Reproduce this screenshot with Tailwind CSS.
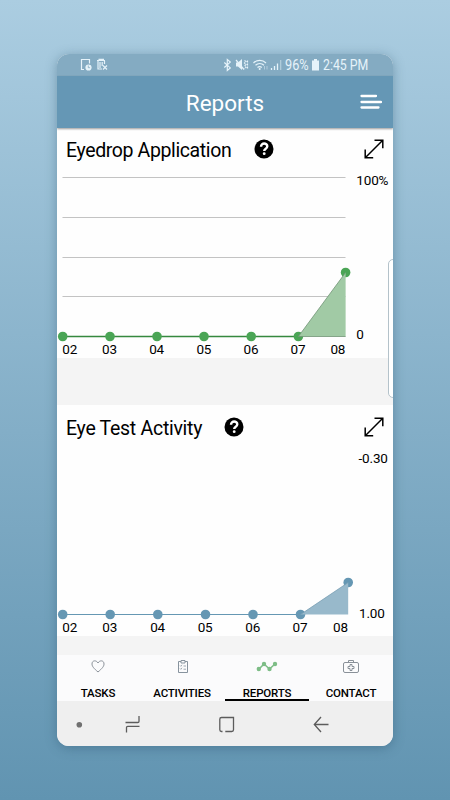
<!DOCTYPE html>
<html lang="en">
<head>
    <meta charset="UTF-8">
    <meta name="viewport" content="width=device-width, initial-scale=1.0">
    <title>Reports</title>
    <script src="https://cdn.jsdelivr.net/npm/@tailwindcss/browser@4"></script>
</head>
<body class="h-[800px] overflow-hidden bg-linear-to-b from-[#abcde1] to-[#6194b1] font-[Roboto,sans-serif] text-black">
    <div class="relative ml-[57px] mt-[54px] flex h-[692px] w-[336px] flex-col overflow-hidden rounded-xl bg-[#f4f4f4] shadow-[0_2px_12px_rgba(40,80,105,0.4)]">

        <!-- Status bar -->
        <div class="flex h-[22px] shrink-0 items-center bg-[#84abc2] text-[#e6f3fa]">
            <svg class="h-[22px] w-[166px] shrink-0" viewBox="57 54 166 22" fill="none" stroke="currentColor">
                <path d="M84 69.5h-2.5v-10h8v4" stroke-width="1.2"/>
                <circle cx="88.5" cy="67.5" r="3.1" fill="currentColor" stroke="none"/>
                <path d="M88.3 65.5v2.2h1.8" stroke="#84abc2" stroke-width=".8"/>
                <path d="M97 60.5h8M98 60.5v8.5h4M100 62v6M102.2 62v4M104.5 61v3M98.5 59.3h5.5" stroke-width="1.2"/>
                <path d="M103 65.5l4 4M107 65.5l-4 4" stroke-width="1.1"/>
            </svg>
            <svg class="h-[22px] w-[62px] shrink-0" viewBox="223 54 62 22" fill="none" stroke="currentColor">
                <path d="M224.3 62.5l6 5.4-3 2.6v-11l3 2.6-6 5.4" stroke-width="1.2"/>
                <path d="M236 62.5h2l4-3.5v11l-4-3.5h-2z" fill="currentColor" stroke="none"/>
                <path d="M236 60l8 9.5" stroke-width="1.2"/>
                <path d="M244.5 60.5l1.500 1-1.500 1.500 1.500 1.500-1.500 1.500 1.500 1.500-1.500 1.500M247.500 60.500v9" stroke-width="1.2" stroke-dasharray="2 1"/>
                <path d="M253.500 63c3.500-3.500 9-3.500 12.500 0M255.500 65.300c2.500-2.300 6-2.300 8.500 0M257.500 67.500c1.300-1.200 3-1.200 4.300 0" stroke-width="1.200"/>
                <circle cx="259.700" cy="69" r="1" fill="currentColor" stroke="none"/>
                <path d="M264.500 66v3.500M267 66v3.500" stroke-width=".8" opacity=".6"/>
                <path d="M271.500 68v2M274.500 66v4M277.500 63.500v6.500" stroke-width="1.300"/>
                <path d="M280.700 60v10" stroke-width="1.200" opacity=".5"/>
            </svg>
            <span class="w-[26px] shrink-0 origin-left scale-x-[0.910] whitespace-nowrap pt-px text-[14px]">96%</span>
            <svg class="h-[22px] w-3 shrink-0" viewBox="311 54 12 22" fill="currentColor">
                <path d="M314 59h3v1.500h2V70.500h-7V60.500h2z"/>
            </svg>
            <span class="origin-left scale-x-[0.880] whitespace-nowrap pt-px text-[14px]">2:45 PM</span>
        </div>

        <!-- App header -->
        <header class="relative z-10 flex h-[52px] shrink-0 items-center bg-[#6597b5] shadow-[0_1px_2px_rgba(0,0,0,0.4)]">
            <h1 class="w-full pt-1 text-center text-[22.5px] text-white">Reports</h1>
            <svg class="absolute right-[11px] top-[18px] h-4 w-[22px]" viewBox="0 0 22 16" stroke="#fff" stroke-width="2.3" stroke-linecap="round">
                <path d="M1.5 2h14.5M1.5 8h19.5M1.5 13.5h17"/>
            </svg>
        </header>

        <!-- Eyedrop chart -->
        <section class="h-[230px] shrink-0 bg-[#fefefe]">
            <div class="flex h-11 items-center pl-[9px] pr-[9px]">
                <h2 class="w-[188px] whitespace-nowrap pt-px text-[19.5px] tracking-[-0.380px]">Eyedrop Application</h2>
                <svg class="mb-0.5 size-5" viewBox="0 0 20 20">
                    <circle cx="10" cy="10" r="9.5"/>
                    <path d="M7 7.800C7 3.300 13.300 3.800 13.300 7.300c0 2.500-3.100 2.200-3.100 4.600" fill="none" stroke="#fff" stroke-width="2.400"/>
                    <circle cx="10.200" cy="14.700" r="1.400" fill="#fff"/>
                </svg>
                <svg class="mb-0.5 ml-auto size-5" viewBox="0 0 20 20" fill="none" stroke="#000" stroke-width="1.500">
                    <path d="M1.500 18.500L18.500 1.500M10.500 1.200h8.300v8M1.200 10.500v8.300h8"/>
                </svg>
            </div>
            <svg class="block h-[186px] w-[336px] text-[13.5px] tracking-[-0.150px]" viewBox="57 172 336 186">
                <path d="M62.500 177.500h283M62.500 217.500h283M62.500 257.500h283M62.500 296.500h283" stroke="#c3c3c3"/>
                <path d="M62.500 336.500H298" stroke="#35893f" stroke-width="1.300"/>
                <g fill="#4aa555">
                    <circle cx="62.700" cy="336.500" r="4.800"/>
                    <circle cx="110" cy="336.500" r="4.800"/>
                    <circle cx="157" cy="336.500" r="4.800"/>
                    <circle cx="204" cy="336.500" r="4.800"/>
                    <circle cx="251.200" cy="336.500" r="4.800"/>
                    <circle cx="298.400" cy="336.500" r="4.800"/>
                    <circle cx="345.600" cy="272.500" r="4.800"/>
                </g>
                <path d="M298.400 336.500L345.600 272.500v64z" fill="#a1caa5"/>
                <path d="M345.600 336.500H298.400L345.600 272.500" fill="none" stroke="#719476" stroke-width=".8"/>
                <text x="62.300" y="354.400">02</text>
                <text x="102" y="354.400">03</text>
                <text x="149.200" y="354.400">04</text>
                <text x="196.400" y="354.400">05</text>
                <text x="243.500" y="354.400">06</text>
                <text x="290.500" y="354.400">07</text>
                <text x="330.400" y="354.400">08</text>
                <text x="356.300" y="185.300">100%</text>
                <text x="356.200" y="339.400">0</text>
            </svg>
        </section>

        <!-- Eye test chart -->
        <section class="mt-[47px] h-[231px] shrink-0 bg-[#fefefe]">
            <div class="flex h-11 items-center pl-[9px] pr-[9px]">
                <h2 class="w-[158px] whitespace-nowrap pt-[3px] text-[19.5px] tracking-[-0.280px]">Eye Test Activity</h2>
                <svg class="size-5" viewBox="0 0 20 20">
                    <circle cx="10" cy="10" r="9.5"/>
                    <path d="M7 7.800C7 3.300 13.300 3.800 13.300 7.300c0 2.500-3.100 2.200-3.100 4.600" fill="none" stroke="#fff" stroke-width="2.400"/>
                    <circle cx="10.200" cy="14.700" r="1.400" fill="#fff"/>
                </svg>
                <svg class="ml-auto size-5" viewBox="0 0 20 20" fill="none" stroke="#000" stroke-width="1.500">
                    <path d="M1.500 18.500L18.500 1.500M10.500 1.200h8.300v8M1.200 10.500v8.300h8"/>
                </svg>
            </div>
            <svg class="block h-[187px] w-[336px] text-[13.5px] tracking-[-0.150px]" viewBox="57 449 336 187">
                <path d="M62.500 614.500H300.500" stroke="#6597b3" stroke-width="1.200"/>
                <g fill="#6597b3">
                    <circle cx="62.700" cy="614.500" r="4.800"/>
                    <circle cx="110.200" cy="614.500" r="4.800"/>
                    <circle cx="157.800" cy="614.500" r="4.800"/>
                    <circle cx="205.500" cy="614.500" r="4.800"/>
                    <circle cx="253" cy="614.500" r="4.800"/>
                    <circle cx="300.500" cy="614.500" r="4.800"/>
                    <circle cx="348.200" cy="582.500" r="4.800"/>
                </g>
                <path d="M300.500 614.500L348.200 582.500v32z" fill="#98b9cb"/>
                <path d="M300.500 614.500L348.200 582.500" stroke="#769db3" stroke-width=".8"/>
                <text x="62.300" y="632.400">02</text>
                <text x="102.300" y="632.400">03</text>
                <text x="150.200" y="632.400">04</text>
                <text x="197.700" y="632.400">05</text>
                <text x="245.300" y="632.400">06</text>
                <text x="292.500" y="632.400">07</text>
                <text x="333" y="632.400">08</text>
                <text x="358.500" y="463.300">-0.30</text>
                <text x="359" y="617.500">1.00</text>
            </svg>
        </section>

        <!-- Tabs -->
        <nav class="mt-[19px] grid h-[46px] shrink-0 grid-cols-4 bg-[#fbfbfc] text-center text-[11.5px] font-medium leading-[18px] tracking-[-0.200px]">
            <div class="flex flex-col items-center justify-between pt-[3px]">
                <svg class="mr-0.5 h-4 w-6" viewBox="0 0 24 16" fill="none" stroke="#899098">
                    <path d="M12 14C8 10.500 6 8.500 6 6 6 2 10.500 2 12 5 13.500 2 18 2 18 6 18 8.500 16 10.500 12 14z"/>
                </svg>
                <span class="h-[17px] w-full border-b-2 border-transparent pr-0.5">TASKS</span>
            </div>
            <div class="flex flex-col items-center justify-between pt-[3px]">
                <svg class="h-4 w-6" viewBox="0 0 24 16" fill="none" stroke="#87939e">
                    <path d="M10 3.500H7.500v11h9v-11H14M10 2.500h4v2.500h-4z"/>
                    <path d="M9 7.500l.8.800 1.200-1.500M12.500 8h2.500M9 10.500l.8.800 1.200-1.500M12.500 11.200h2.500" stroke-width=".8"/>
                </svg>
                <span class="h-[17px] w-full border-b-2 border-transparent pr-0.5">ACTIVITIES</span>
            </div>
            <div class="flex flex-col items-center justify-between pt-[3px]">
                <svg class="h-4 w-6" viewBox="0 0 24 16" fill="#7dbd86" stroke="#7dbd86">
                    <path d="M4 11l5-5 5.500 5 5.500-5" fill="none" stroke-width="1.600"/>
                    <g stroke="none">
                        <circle cx="3.800" cy="11" r="2.200"/>
                        <circle cx="9" cy="6" r="2.200"/>
                        <circle cx="14.500" cy="11" r="2.200"/>
                        <circle cx="20" cy="6" r="2.200"/>
                    </g>
                </svg>
                <span class="h-[17px] w-full border-b-2 border-black">REPORTS</span>
            </div>
            <div class="flex flex-col items-center justify-between pt-[3px]">
                <svg class="h-4 w-6" viewBox="0 0 24 16" fill="none" stroke="#899098">
                    <rect x="4.500" y="4.500" width="15" height="10" rx="1.500"/>
                    <path d="M9.500 4.500v-2h5v2M11 6.500h2v2h2v2h-2v2h-2v-2H9v-2h2z"/>
                </svg>
                <span class="h-[17px] w-full border-b-2 border-transparent">CONTACT</span>
            </div>
        </nav>

        <!-- Android navigation bar -->
        <div class="h-[45px] shrink-0 bg-[#efefef]">
            <svg class="block h-[45px] w-[336px]" viewBox="57 701 336 45" fill="none" stroke="#5c5c5c" stroke-width="1.300">
                <circle cx="79.300" cy="724.700" r="2.800" fill="#707070" stroke="none"/>
                <path d="M139 716v5.300q0 1.200-1.200 1.200H125.500M126.500 732.500v-5q0-1.200 1.200-1.200H139.500"/>
                <path d="M222.500 731.500h-1q-1.700 0-1.700-1.700v-10.600q0-1.700 1.700-1.700h12v12.300q0 1.700-1.700 1.700h-6.500"/>
                <path d="M328.500 724.500H315M321 717l-6.700 7.500 6.700 7.500"/>
            </svg>
        </div>

        <!-- Edge panel handle -->
        <div class="absolute -right-1.5 top-[205px] h-[139px] w-[11px] rounded-[5px] border border-[#b4c2ca] bg-white"></div>
    </div>
</body>
</html>
